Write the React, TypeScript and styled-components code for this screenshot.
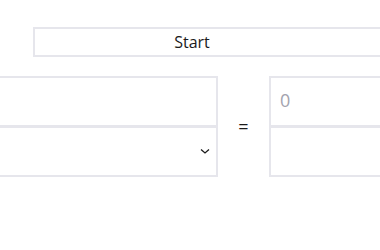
import React from "react";
import styled, { createGlobalStyle } from "styled-components";

const Global = createGlobalStyle`
  html, body { margin: 0; padding: 0; background: #ffffff; overflow: hidden; }
  body { font-family: "Open Sans", "Noto Sans", sans-serif; color: #1b1b1b; }
`;

const Page = styled.div`
  width: 380px;
  height: 250px;
  overflow: hidden;
  padding-top: 27px;
  box-sizing: border-box;
`;

const StartButton = styled.button`
  display: block;
  margin-left: 33px;
  width: 360px;
  height: 30px;
  box-sizing: border-box;
  border: 2px solid #e6e6ec;
  background: #ffffff;
  font-family: "Open Sans", "Noto Sans", sans-serif;
  font-size: 16px;
  color: #1b1b1b;
  padding: 0 42px 1px 0;
  text-align: center;
  line-height: 24px;
`;

const Converter = styled.div`
  display: grid;
  grid-template-columns: 220px 51px 200px;
  margin-top: 19px;
  margin-left: -2px;
`;

const Column = styled.div`
  display: flex;
  flex-direction: column;
`;

const Field = styled.div`
  box-sizing: border-box;
  height: 51px;
  border: 2px solid #e6e6ec;
  background: #ffffff;
  display: flex;
  align-items: center;
  padding: 0 9px;
  & + & { margin-top: -1px; }
`;

const Placeholder = styled.span`
  font-family: "Open Sans", "Noto Sans", sans-serif;
  font-size: 18px;
  color: #a3a3ae;
  margin-top: -3px;
`;

const SelectField = styled(Field)`
  justify-content: flex-end;
  padding-right: 6px;
`;

const Equals = styled.div`
  display: flex;
  align-items: center;
  justify-content: center;
  font-family: "Open Sans", "Noto Sans", sans-serif;
  font-size: 18px;
  color: #1b1b1b;
  padding-bottom: 1px;
`;

const Chevron = () => (
  <svg width="10" height="7" viewBox="0 0 10 7">
    <polyline points="1,1.5 5,5 9,1.5" fill="none" stroke="#1b1b1b" strokeWidth="1.3" />
  </svg>
);

export default function App() {
  return (
    <>
      <Global />
      <Page>
        <StartButton>Start</StartButton>
        <Converter>
          <Column>
            <Field />
            <SelectField>
              <Chevron />
            </SelectField>
          </Column>
          <Equals>=</Equals>
          <Column>
            <Field>
              <Placeholder>0</Placeholder>
            </Field>
            <Field />
          </Column>
        </Converter>
      </Page>
    </>
  );
}
